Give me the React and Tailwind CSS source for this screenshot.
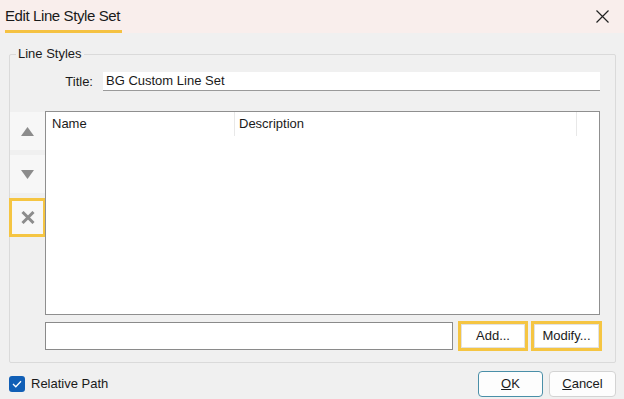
// Edit Line Style Set dialog
import React from "react";

const font = { fontFamily: '"Liberation Sans", Arial, sans-serif' };

function SideButton({ children, highlight }) {
  const inner = (
    <div className="w-full h-full flex items-center justify-center bg-[#f7f7f7]">{children}</div>
  );
  if (highlight) {
    return (
      <div className="h-[39px] w-[37px] -ml-[1px] border-[3px] border-[#f5c542] bg-[#f7f7f7]">{inner}</div>
    );
  }
  return <div className="h-[38px] w-[35px]">{inner}</div>;
}

function YellowButton({ label, width }) {
  return (
    <div className={`h-[30px] border-[3px] border-[#f5c542] ${width}`}>
      <div className="w-full h-full bg-white border border-[#e2e2e2] flex items-center justify-center text-[13px] text-[#1a1a1a]">
        {label}
      </div>
    </div>
  );
}

export default function App() {
  return (
    <div className="w-[624px] h-[399px] bg-[#f0f0f0] flex flex-col overflow-hidden" style={font}>
      {/* Title bar */}
      <div className="h-[33px] bg-[#f9eeec] flex items-stretch justify-between shrink-0">
        <div className="ml-[5px] flex items-center border-b-[3px] border-[#f5c242] pt-[3px] pr-[2px]">
          <span className="text-[15px] tracking-[-0.4px] text-[#1a1a1a]">Edit Line Style Set</span>
        </div>
        <div className="w-[28px] flex items-center justify-start">
          <svg width="13" height="13" viewBox="0 0 13 13">
            <path d="M0.5 0.5 L12.5 12.5 M12.5 0.5 L0.5 12.5" stroke="#222" strokeWidth="1.2" />
          </svg>
        </div>
      </div>

      {/* Group box */}
      <div className="relative mt-[21px] ml-[9px] w-[607px] h-[309px] border border-[#dadada] rounded-[2px]">
        <div className="absolute left-[6px] -top-[9px] px-[2px] bg-[#f0f0f0] text-[13px] leading-[16px] text-[#1a1a1a]">
          Line Styles
        </div>

        {/* Title row */}
        <div className="mt-[17px] flex items-center h-[19px]">
          <div className="w-[83px] text-right text-[13px] text-[#1a1a1a]">Title:</div>
          <div className="ml-[10px] w-[497px] h-[19px] bg-white border-b border-[#9a9a9a] flex items-center pl-[3px] text-[13px] text-[#1a1a1a]">
            BG Custom Line Set
          </div>
        </div>

        {/* List area */}
        <div className="mt-[20px] flex">
          <div className="w-[35px] pt-[1px] flex flex-col gap-[5px]">
            <SideButton>
              <svg width="13" height="9" viewBox="0 0 13 9">
                <path d="M6.5 0 L13 9 L0 9 Z" fill="#8c8c8c" />
              </svg>
            </SideButton>
            <SideButton>
              <svg width="13" height="9" viewBox="0 0 13 9">
                <path d="M0 0 L13 0 L6.5 9 Z" fill="#8c8c8c" />
              </svg>
            </SideButton>
            <SideButton highlight>
              <svg width="14" height="13" viewBox="0 0 14 13">
                <path d="M1.5 1 L12.5 12 M12.5 1 L1.5 12" stroke="#8c8c8c" strokeWidth="3" />
              </svg>
            </SideButton>
          </div>
          <div className="w-[555px] h-[204px] bg-white border border-[#8f8f8f] flex flex-col">
            <div className="h-[24px] flex text-[13px] text-[#1a1a1a]">
              <div className="w-[189px] pl-[6px] flex items-center border-r border-[#e8e8e8]">Name</div>
              <div className="w-[342px] pl-[4px] flex items-center border-r border-[#e8e8e8]">Description</div>
              <div className="flex-1" />
            </div>
          </div>
        </div>

        {/* Edit row */}
        <div className="mt-[6px] ml-[35px] flex items-center">
          <div className="w-[408px] h-[28px] bg-white border border-[#8a8a8a]" />
          <div className="ml-[5px]">
            <YellowButton label="Add..." width="w-[70px]" />
          </div>
          <div className="ml-[3px]">
            <YellowButton label="Modify..." width="w-[71px]" />
          </div>
        </div>
      </div>

      {/* Footer */}
      <div className="mt-[8px] flex items-center h-[26px]">
        <div className="ml-[9px] w-[16px] h-[16px] rounded-[3px] bg-[#115fb6] flex items-center justify-center">
          <svg width="10" height="8" viewBox="0 0 10 8">
            <path d="M1 4 L3.8 6.8 L9 1.2" stroke="white" strokeWidth="1.3" fill="none" />
          </svg>
        </div>
        <span className="ml-[6px] text-[13px] text-[#1a1a1a]">Relative Path</span>
        <div className="ml-auto flex gap-[6px] mr-[8px]">
          <div className="w-[65px] h-[26px] rounded-[4px] border border-[#4a8fa8] bg-[#fdfdfd] flex items-center justify-center text-[13px] text-[#1a1a1a]">
            <span><span className="underline">O</span>K</span>
          </div>
          <div className="w-[67px] h-[26px] rounded-[4px] border border-[#d3d3d3] bg-[#fdfdfd] flex items-center justify-center text-[13px] text-[#1a1a1a]">
            <span><span className="underline">C</span>ancel</span>
          </div>
        </div>
      </div>
    </div>
  );
}
